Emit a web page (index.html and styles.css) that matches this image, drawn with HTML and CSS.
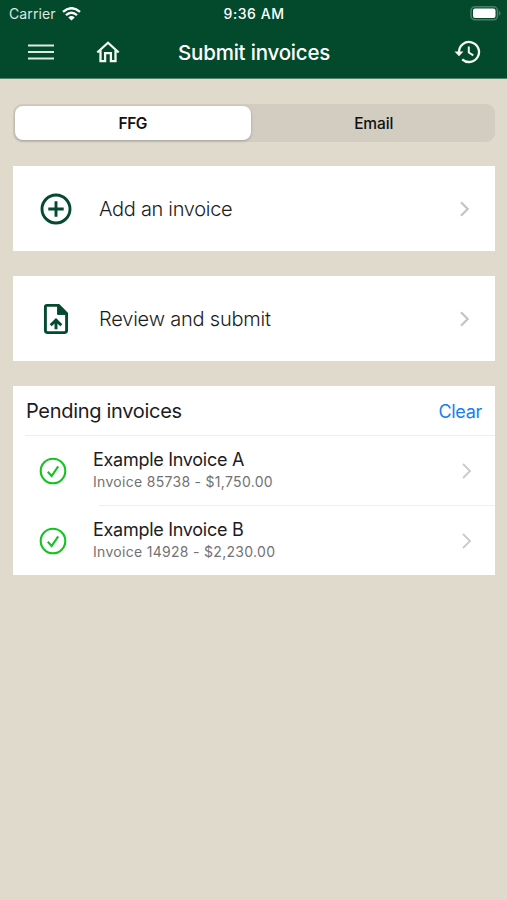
FILE: index.html
```html
<!DOCTYPE html>
<html lang="en">
<head>
<meta charset="utf-8">
<title>Submit invoices</title>
<link rel="stylesheet" href="styles.css">
</head>
<body>
<header class="top">
  <div class="status">
    <div class="carrier"><span>Carrier</span>
      <svg width="19" height="14" viewBox="0 0 19 14" fill="none" stroke="#fff" stroke-width="2.4"><path d="M1 4.800Q9.500-2.400 18 4.800M4 8.100Q9.500 3.400 15 8.100"/><path d="M9.500 13.600 6.300 10.400Q9.500 7.800 12.700 10.400Z" fill="#fff" stroke="none"/></svg>
    </div>
    <span class="time">9:36 AM</span>
    <svg class="battery" width="31" height="15" viewBox="0 0 31 15"><rect x="1" y=".8" width="26.500" height="13" rx="4" fill="none" stroke="#4c7d65" stroke-width="1.600"/><rect x="3" y="2.500" width="22.500" height="9.500" rx="2" fill="#fff"/><path d="M29 5v4.600q1.500-.6 1.500-2.300T29 5Z" fill="#4c7d65"/></svg>
  </div>
  <nav class="bar">
    <svg class="menu" width="26" height="16" viewBox="0 0 26 16" stroke="#dcebdf" stroke-width="1.800"><path d="M0 1.500h26M0 8h26M0 14.500h26"/></svg>
    <svg class="home" width="26" height="24" viewBox="0 0 26 24" fill="none" stroke="#f4f7f2" stroke-width="2.300"><path d="M2.300 12.500 13 2.700l10.700 9.800M5.500 10.500v10.700h4.600V13.200h5.800v8h4.600V10.500"/></svg>
    <h1>Submit invoices</h1>
    <svg class="history" width="27" height="24" viewBox="0 0 27 24" fill="none" stroke="#f4f7f2" stroke-width="2.300"><path d="M5 12A10 10 0 1 1 8.200 19.300"/><path d="M14.800 6.500v6l4.500 2.800" stroke-width="2"/><path d="M.5 11.500h9L5 16.300Z" fill="#f4f7f2" stroke="none"/></svg>
  </nav>
</header>
<main>
  <div class="segments"><div class="seg on">FFG</div><div class="seg">Email</div></div>
  <section class="action">
    <svg class="lead" width="32" height="32" viewBox="0 0 32 32" fill="none" stroke="#044a30" stroke-width="2.900"><circle cx="16" cy="16" r="14"/><path d="M16 8.300v15.400M8.300 16h15.400"/></svg>
    <span class="label add">Add an invoice</span>
    <svg class="chev" width="10" height="16" viewBox="0 0 10 16"><path d="m1 1.300 6.700 6.700-6.700 6.700"/></svg>
  </section>
  <section class="action">
    <svg class="lead" width="32" height="32" viewBox="0 0 32 32" fill="none" stroke="#044a30" stroke-width="2.900" stroke-linejoin="round"><path d="M7 2.400h11.500l8.100 8.100v16.800q0 2.300-2.300 2.300H7.700q-2.300 0-2.300-2.300V4Q5.400 2.400 7 2.400Z"/><path d="M17.600 2.400v9h9Z" fill="#044a30" stroke-width="1"/><path d="M16 26.300v-8.500M10.700 22.200l5.300-5.100 5.300 5.100" stroke-linejoin="miter"/></svg>
    <span class="label review">Review and submit</span>
    <svg class="chev" width="10" height="16" viewBox="0 0 10 16"><path d="m1 1.300 6.700 6.700-6.700 6.700"/></svg>
  </section>
  <section class="pending">
    <div class="head"><h2>Pending invoices</h2><span class="clear">Clear</span></div>
    <div class="row">
      <svg class="check" width="28" height="28" viewBox="0 0 28 28"><circle cx="14" cy="14" r="12.300"/><path d="m8.800 14.800 3.800 4.200 6.600-9.600"/></svg>
      <div class="info"><div class="name">Example Invoice A</div><div class="sub">Invoice 85738 - $1,750.00</div></div>
      <svg class="chev thin" width="10" height="16" viewBox="0 0 10 16"><path d="m1 1 7 7-7 7"/></svg>
    </div>
    <div class="row">
      <svg class="check" width="28" height="28" viewBox="0 0 28 28"><circle cx="14" cy="14" r="12.300"/><path d="m8.800 14.800 3.800 4.200 6.600-9.600"/></svg>
      <div class="info"><div class="name">Example Invoice B</div><div class="sub">Invoice 14928 - $2,230.00</div></div>
      <svg class="chev thin" width="10" height="16" viewBox="0 0 10 16"><path d="m1 1 7 7-7 7"/></svg>
    </div>
  </section>
</main>
</body>
</html>
```
FILE: styles.css
```css
* { box-sizing: border-box; }
body { margin: 0; min-height: 900px; background: #dfdacc; font-family: Inter, "Liberation Sans", sans-serif; color: #1c1c1e; }
svg { display: block; flex: none; }
h1, h2 { margin: 0; }
.top { height: 79px; background: #034a2d; border-bottom: 1px solid #52806a; color: #fff; }
.status { display: grid; grid-template-columns: 1fr auto 1fr; align-items: center; height: 27px; padding: 0 6px 0 9px; }
.carrier { display: flex; align-items: center; gap: 6px; font-size: 14px; letter-spacing: 0.1px; color: #dce8e0; }
.time { margin-right: 2px; font-size: 14px; font-weight: 500; letter-spacing: 0.55px; }
.battery { justify-self: end; }
.bar { display: flex; align-items: center; height: 50px; padding: 0 26px 0 28px; }
.home { margin-left: 41px; }
.bar h1 { margin-left: 57px; font-size: 20.5px; font-weight: 500; letter-spacing: -0.2px; white-space: nowrap; }
.history { margin-left: auto; }
main { padding: 25px 12px 0 13px; }
.segments { display: flex; height: 38px; padding: 2px; border-radius: 9px; background: #d2ccc1; }
.seg { flex: 1; display: flex; align-items: center; justify-content: center; border-radius: 8px; font-size: 15.5px; font-weight: 500; letter-spacing: -0.1px; color: #111; }
.seg.on { flex: 0 0 235.5px; margin-right: 4px; background: #fff; font-weight: 600; letter-spacing: -0.5px; box-shadow: 0 1px 3px rgba(0, 0, 0, 0.22); }
.action { display: flex; align-items: center; height: 85.4px; margin-top: 24.6px; padding: 0 25px 0 27px; background: #fff; }
.segments + .action { margin-top: 24px; }
.label { margin-left: 27px; font-size: 20px; font-weight: 300; letter-spacing: -0.2px; }
.add { letter-spacing: -0.3px; }
.chev { margin-left: auto; fill: none; stroke: #c4c4c4; stroke-width: 2.2; }
.chev.thin { stroke: #cacaca; stroke-width: 1.8; }
.pending { margin-top: 24.6px; background: #fff; }
.head { display: flex; align-items: center; justify-content: space-between; height: 50px; margin-left: 12px; padding-right: 13px; border-bottom: 1px solid #eeeeee; }
.head h2 { padding: 1px 0 0 1px; font-size: 20px; font-weight: 400; letter-spacing: -0.3px; }
.clear { padding-top: 2px; font-size: 18px; letter-spacing: -0.3px; color: #1780f2; }
.row { display: flex; align-items: center; height: 70px; padding: 0 23px 0 26px; }
.head + .row { height: 69.4px; }
.row + .row { padding-top: 1px; background: linear-gradient(#eeeeee, #eeeeee) 86px 0 / 100% 1px no-repeat; }
.check { fill: none; stroke: #13c322; stroke-width: 2.1; }
.info { margin: -2px 0 0 26px; }
.name { font-size: 18px; line-height: 24px; letter-spacing: -0.28px; }
.sub { font-size: 14px; line-height: 20px; color: #727274; letter-spacing: 0.3px; }
```
